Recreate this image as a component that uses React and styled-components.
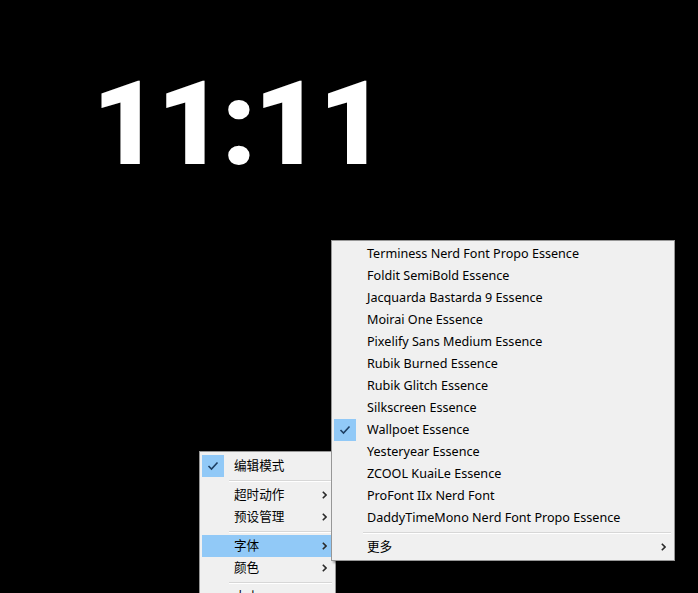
import React from "react";
import styled, { createGlobalStyle } from "styled-components";

const Global = createGlobalStyle`
  html, body { margin: 0; padding: 0; background: #000; }
  body { width: 698px; height: 593px; overflow: hidden; }
`;

const Desktop = styled.div`
  position: relative;
  width: 698px;
  height: 593px;
  background: #000;
  overflow: hidden;
`;

const Clock = styled.div`
  padding: 66px 0 0 92px;
  font-family: Roboto, "Liberation Sans", sans-serif;
  font-weight: 900;
  font-size: 117px;
  line-height: 1;
  letter-spacing: -3px;
  color: #fff;
`;

const Menu = styled.div`
  position: absolute;
  left: ${(p) => p.$x}px;
  top: ${(p) => p.$y}px;
  width: ${(p) => p.$w}px;
  z-index: ${(p) => p.$z};
  box-sizing: border-box;
  background: #f0f0f0;
  border: 1px solid #979797;
  padding: ${(p) => p.$pad}px 2px 2px;
  box-shadow: 2px 2px 2px rgba(0, 0, 0, 0.35);
  font-family: "Segoe UI", "Noto Sans", "Noto Sans CJK SC", sans-serif;
  font-size: 12.6px;
  color: #000;
`;

const Row = styled.div`
  display: flex;
  align-items: center;
  height: 22px;
  background: ${(p) => (p.$active ? "#91c9f7" : "transparent")};
`;

const Gutter = styled.div`
  flex: 0 0 22px;
  height: 22px;
  display: flex;
  align-items: center;
  justify-content: center;
  background: ${(p) => (p.$checked ? "#91c9f7" : "transparent")};
`;

const Label = styled.span`
  flex: 1;
  padding-left: ${(p) => p.$indent}px;
  white-space: nowrap;
  line-height: 22px;
  margin-top: -1px;
`;

const Arrow = styled.span`
  flex: 0 0 auto;
  width: 9px;
  margin-right: ${(p) => p.$gap}px;
  display: flex;
  align-items: center;
`;

const Separator = styled.div`
  height: 7px;
  display: flex;
  align-items: center;
  padding-left: ${(p) => p.$indent}px;
  padding-right: 1px;
  &::after {
    content: "";
    flex: 1;
    height: 1px;
    background: #d7d7d7;
    box-shadow: 0 1px 0 #fff;
  }
`;

const Check = () => (
  <svg width="12" height="10" viewBox="0 0 12 10">
    <polyline
      points="1.5,5 4.5,8 10.5,1.5"
      fill="none"
      stroke="#1e3f63"
      strokeWidth="1.6"
    />
  </svg>
);

const Chevron = () => (
  <svg width="5" height="8" viewBox="0 0 5 8">
    <polyline points="0.8,0.8 4,4 0.8,7.2" fill="none" stroke="#2a2a2a" strokeWidth="1.6" />
  </svg>
);

const fonts = [
  "Terminess Nerd Font Propo Essence",
  "Foldit SemiBold Essence",
  "Jacquarda Bastarda 9 Essence",
  "Moirai One Essence",
  "Pixelify Sans Medium Essence",
  "Rubik Burned Essence",
  "Rubik Glitch Essence",
  "Silkscreen Essence",
  "Wallpoet Essence",
  "Yesteryear Essence",
  "ZCOOL KuaiLe Essence",
  "ProFont IIx Nerd Font",
  "DaddyTimeMono Nerd Font Propo Essence",
];

const settings = [
  { label: "编辑模式", checked: true },
  "sep",
  { label: "超时动作", sub: true },
  { label: "预设管理", sub: true },
  "sep",
  { label: "字体", sub: true, active: true },
  { label: "颜色", sub: true },
  "sep",
  { label: "大小", sub: true },
];

export default function App() {
  return (
    <Desktop>
      <Global />
      <Clock>11:11</Clock>

      <Menu $x={199} $y={451} $w={137} $z={1} $pad={3}>
        {settings.map((item, i) =>
          item === "sep" ? (
            <Separator key={i} $indent={27} />
          ) : (
            <Row key={i} $active={item.active}>
              <Gutter $checked={item.checked}>{item.checked && <Check />}</Gutter>
              <Label $indent={10}>{item.label}</Label>
              {item.sub && (
                <Arrow $gap={2}>
                  <Chevron />
                </Arrow>
              )}
            </Row>
          )
        )}
      </Menu>

      <Menu $x={331} $y={240} $w={344} $z={2} $pad={2}>
        {fonts.map((name) => (
          <Row key={name}>
            <Gutter $checked={name === "Wallpoet Essence"}>
              {name === "Wallpoet Essence" && <Check />}
            </Gutter>
            <Label $indent={11}>{name}</Label>
          </Row>
        ))}
        <Separator $indent={29} />
        <Row>
          <Gutter />
          <Label $indent={11}>更多</Label>
          <Arrow $gap={2}>
            <Chevron />
          </Arrow>
        </Row>
      </Menu>
    </Desktop>
  );
}
